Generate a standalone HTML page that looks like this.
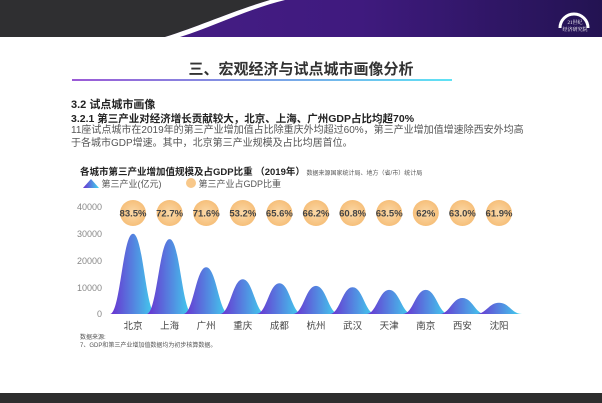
<!DOCTYPE html><html><head><meta charset="utf-8"><style>
body{margin:0;width:602px;height:403px;position:relative;overflow:hidden;background:#fff;font-family:"Liberation Sans","Noto Sans CJK SC",sans-serif}
.a{position:absolute;white-space:nowrap}
</style></head><body>
<svg class="a" style="left:0;top:0" width="602" height="403">
<defs>
<linearGradient id="pu" x1="0" x2="1"><stop offset="0" stop-color="#4a1f8a"/><stop offset="0.6" stop-color="#3f1a7e"/><stop offset="1" stop-color="#231352"/></linearGradient>
<linearGradient id="ln" x1="0" x2="1"><stop offset="0" stop-color="#9b59d6"/><stop offset="1" stop-color="#5fe3f5"/></linearGradient>
<linearGradient id="bar" x1="0" x2="1"><stop offset="0" stop-color="#6a2fd0"/><stop offset="1" stop-color="#3fd6ef"/></linearGradient>
<radialGradient id="ci"><stop offset="0" stop-color="#fbd9a8"/><stop offset="1" stop-color="#f6bf7a"/></radialGradient>
</defs>
<rect x="0" y="0" width="602" height="37" fill="url(#pu)"/>
<path d="M0 0 H270 C230 12 200 26 165 37 H0Z" fill="#2f2f31"/>
<path d="M270 0 C230 12 200 26 165 37 L180 37 C215 26 245 10 285 0Z" fill="#fff"/>
<path d="M560 28 A14 14 0 0 1 588 28" stroke="#fff" stroke-width="3" fill="none"/>
<text x="575" y="24" font-size="5" fill="#fff" text-anchor="middle" font-family="Liberation Serif,Noto Serif CJK SC,serif">21世纪</text>
<text x="575" y="31" font-size="5" fill="#fff" text-anchor="middle" font-family="Liberation Serif,Noto Serif CJK SC,serif">经济研究院</text>
<rect x="72" y="79" width="380" height="2" fill="url(#ln)"/>
<rect x="0" y="393" width="602" height="10" fill="#2e2e2e"/>
<g font-size="9" fill="#888" text-anchor="end">
<text x="102" y="210">40000</text><text x="102" y="237">30000</text><text x="102" y="264">20000</text><text x="102" y="291">10000</text><text x="102" y="317">0</text></g>
<g id="bars"></g>
</svg>
<div class="a" style="left:0;width:602px;top:58px;text-align:center;font-size:15px;font-weight:bold;color:#333">三、宏观经济与试点城市画像分析</div>
<div class="a" style="left:71px;top:96px;font-size:11px;font-weight:bold;color:#222">3.2 试点城市画像</div>
<div class="a" style="left:71px;top:111px;font-size:10.5px;font-weight:bold;color:#222">3.2.1 第三产业对经济增长贡献较大，北京、上海、广州GDP占比均超70%</div>
<div class="a" style="left:71px;top:124px;font-size:10px;color:#555;line-height:13px">11座试点城市在2019年的第三产业增加值占比除重庆外均超过60%，第三产业增加值增速除西安外均高<br>于各城市GDP增速。其中，北京第三产业规模及占比均居首位。</div>
<div class="a" style="left:80px;top:164px;font-size:9.5px;font-weight:bold;color:#222">各城市第三产业增加值规模及占GDP比重 （2019年）<span style="font-size:6px;font-weight:normal;color:#555"> 数据来源国家统计局、地方（省/市）统计局</span></div>
<div class="a" style="left:83px;top:177px;font-size:9px;color:#555"><span style="display:inline-block;width:16px;height:9px;background:linear-gradient(90deg,#6a2fd0,#3fd6ef);clip-path:polygon(0 100%,50% 0,100% 100%);vertical-align:-1px"></span> 第三产业(亿元)</div>
<div class="a" style="left:186px;top:177px;font-size:9px;color:#555"><span style="display:inline-block;width:10px;height:10px;border-radius:50%;background:#f8c88a;vertical-align:-1px"></span> 第三产业占GDP比重</div>
<div class="a" style="left:80px;top:334px;font-size:6px;color:#555;line-height:8px">数据来源:<br>7、GDP和第三产业增加值数据均为初步核算数据。</div>
<div id="lab"></div>
<script>
var v=[30000,28000,17500,13000,11500,10500,10000,9000,9000,6000,4200],
p=["83.5%","72.7%","71.6%","53.2%","65.6%","66.2%","60.8%","63.5%","62%","63.0%","61.9%"],
c=["北京","上海","广州","重庆","成都","杭州","武汉","天津","南京","西安","沈阳"];
var s="",l="";
for(var i=0;i<11;i++){var x=133+i*36.6,y=314-v[i]*107/40000,w=23;
s+='<path d="M'+(x-w)+' 314 C'+(x-w*0.55)+' 314 '+(x-w*0.45)+' '+y+' '+x+' '+y+' C'+(x+w*0.45)+' '+y+' '+(x+w*0.55)+' 314 '+(x+w)+' 314Z" fill="url(#bar)"/>';
s+='<circle cx="'+x+'" cy="213" r="13" fill="url(#ci)"/>';
s+='<text x="'+x+'" y="216.5" font-size="9.5" font-weight="bold" fill="#444" text-anchor="middle">'+p[i]+'</text>';
l+='<div class="a" style="left:'+(x-20)+'px;width:40px;text-align:center;top:318px;font-size:9.5px;color:#444">'+c[i]+'</div>';}
document.getElementById("bars").innerHTML=s;document.getElementById("lab").innerHTML=l;
</script>
</body></html>
